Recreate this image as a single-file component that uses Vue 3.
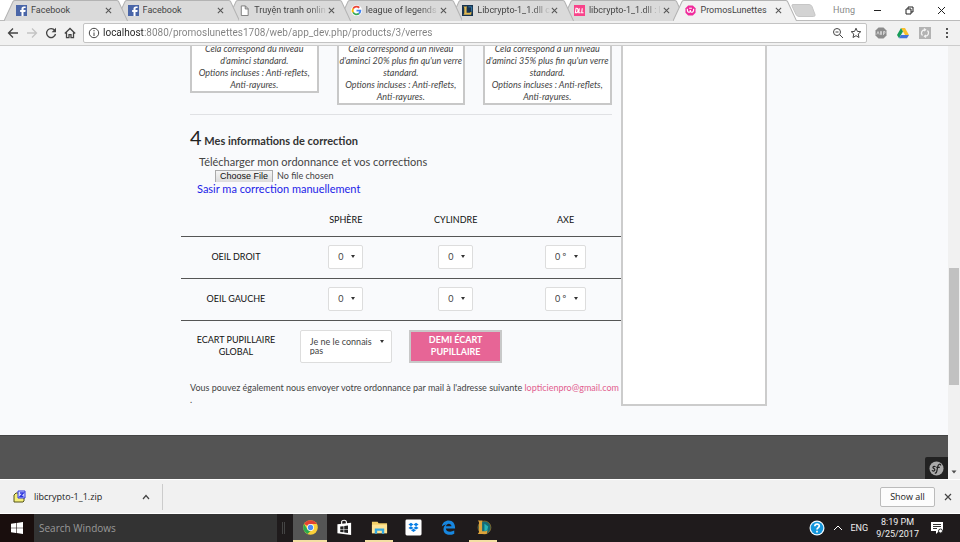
<script setup>
import { ref } from 'vue'

const tabs = [
  { title: 'Facebook', icon: 'facebook' },
  { title: 'Facebook', icon: 'facebook' },
  { title: 'Truyện tranh onlin', icon: 'page', fade: true },
  { title: 'league of legends', icon: 'google', fade: true },
  { title: 'Libcrypto-1_1.dll c', icon: 'lol', fade: true },
  { title: 'libcrypto-1_1.dll : l', icon: 'dll', fade: true },
  { title: 'PromosLunettes', icon: 'promo', active: true },
]

const address = ref('localhost:8080/promoslunettes1708/web/app_dev.php/products/3/verres')

const offers = [
  ['Cela correspond du niveau', "d'aminci standard.", 'Options incluses : Anti-reflets,', 'Anti-rayures.'],
  ['Cela correspond à un niveau', "d'aminci 20% plus fin qu'un verre", 'standard.', 'Options incluses : Anti-reflets,', 'Anti-rayures.'],
  ['Cela correspond à un niveau', "d'aminci 35% plus fin qu'un verre", 'standard.', 'Options incluses : Anti-reflets,', 'Anti-rayures.'],
]

const fields = [
  { name: 'Sphère', value: '0' },
  { name: 'Cylindre', value: '0' },
  { name: 'Axe', value: '0 º' },
]
const eyes = ['Oeil droit', 'Oeil gauche']

const apps = [
  { name: 'Chrome', icon: 'chrome', open: true, focused: true },
  { name: 'Store', icon: 'store' },
  { name: 'Explorer', icon: 'folder', open: true },
  { name: 'Dropbox', icon: 'dropbox' },
  { name: 'Edge', icon: 'edge' },
  { name: 'League of Legends', icon: 'league', open: true },
]
</script>

<template>
  <div class="desktop">
    <header class="tabstrip">
      <div class="tabs">
        <div v-for="(tab, i) in tabs" :key="i" class="tab" :class="{ active: tab.active }" :style="{ zIndex: tab.active ? 20 : 10 - i }">
          <svg class="tab-shape" viewBox="0 0 123 21" preserveAspectRatio="none"><path d="M0 21L9 1.5Q9.500 .5 11 .5H112Q113.500 .5 114 1.500L123 21" /></svg>
          <svg class="favicon" viewBox="0 0 12 12">
            <g v-if="tab.icon === 'facebook'"><rect width="12" height="12" fill="#4a66a8" /><path d="M8.200 12V7.500h2l.3-2H8.200V4.200c0-.7.300-1 1-1h1.300V1.500H8.700C6.900 1.500 6 2.500 6 4v1.500H4.500v2H6V12z" fill="#fff" /></g>
            <path v-else-if="tab.icon === 'page'" d="M2.500 1h4.500l3 3v7.500H2.500zM6.800 1v3.300H10" fill="#fff" stroke="#777" />
            <g v-else-if="tab.icon === 'google'" fill="none" stroke-width="2"><circle cx="6" cy="6" r="6" fill="#fff" stroke="none" /><path d="M9 3A4.200 4.200 0 0 0 2.300 4" stroke="#ea4335" /><path d="M2.300 4a4.200 4.200 0 0 0 0 4" stroke="#fbbc05" /><path d="M2.300 8A4.200 4.200 0 0 0 8.700 9.200" stroke="#34a853" /><path d="M8.700 9.200A4.200 4.200 0 0 0 10.200 6.200H6" stroke="#4285f4" /></g>
            <g v-else-if="tab.icon === 'lol'"><rect width="12" height="12" fill="#17334f" /><path d="M1.500 1.500h4L5 3v5.500h3.500l2-1.500-.5 3.500H1.500L2.500 9V3z" fill="#e0b850" /><path d="M7 2h3.500v5" stroke="#3981b0" fill="none" /></g>
            <g v-else-if="tab.icon === 'dll'"><rect width="12" height="12" fill="#f8438a" /><path d="M1.500 8.500l.7-5h1c1.600 0 1.800 5-.7 5zM5.800 3.500l-.6 5h2M9 3.500l-.6 5h2" fill="none" stroke="#fff" stroke-width="1.200" /></g>
            <g v-else><path d="M3.500.5h5l3 3v5l-3 3h-5l-3-3v-5z" fill="#f02a9b" /><path d="M2.500 4c0 5 3.300 5 3.300 1.500C5.800 9 9.500 9 9.500 4M4.500 3.500h3" fill="none" stroke="#fff" stroke-width="1.200" /></g>
          </svg>
          <span class="tab-title" :class="{ fade: tab.fade }">{{ tab.title }}</span>
          <button class="plain close" :aria-label="'Close ' + tab.title"><svg viewBox="0 0 8 8"><path d="M1 1l6 6M7 1L1 7" /></svg></button>
        </div>
      </div>
      <button class="plain newtab" aria-label="New tab"><svg viewBox="0 0 25 13"><path d="M2 .5h16q2 0 3 2l3 8q.5 2-1.500 2H8q-2 0-3-2L1 2Q.500.500 2 .5" fill="#d3d3d3" stroke="#c6c6c6" /></svg></button>
      <span class="profile">Hưng</span>
      <div class="window-controls">
        <button class="plain" aria-label="Minimize"><svg viewBox="0 0 9 9"><path d="M1 4.500h7" /></svg></button>
        <button class="plain" aria-label="Restore"><svg viewBox="0 0 9 9"><path d="M1 3h5v5H1zM3 3V1h5v5H6" /></svg></button>
        <button class="plain" aria-label="Close window"><svg viewBox="0 0 9 9"><path d="M1 1l7 7M8 1L1 8" /></svg></button>
      </div>
    </header>

    <nav class="toolbar">
      <button class="plain" aria-label="Back"><svg viewBox="0 0 12 12"><path d="M11 6H2M6 1.500L1.500 6 6 10.500" /></svg></button>
      <button class="plain muted" aria-label="Forward"><svg viewBox="0 0 12 12"><path d="M1 6h9M6 1.500L10.500 6 6 10.500" /></svg></button>
      <button class="plain" aria-label="Reload"><svg viewBox="0 0 12 12"><path d="M9.800 3.500A4.500 4.500 0 1 0 10.500 7" /><path d="M11 .8v4.400H6.600z" fill="#444" stroke="none" /></svg></button>
      <button class="plain" aria-label="Home"><svg viewBox="0 0 12 12"><path d="M.8 6.500L6 1.500l5.200 5M2.500 5.500v5.200h2.500v-3h2v3h2.500V5.500" /></svg></button>
      <div class="omnibox">
        <svg class="info" viewBox="0 0 12 12"><circle cx="6" cy="6" r="4.700" /><path d="M6 5.500V9M6 3v1.300" /></svg>
        <input v-model="address" class="address" type="text" aria-label="Address" spellcheck="false">
        <button class="plain" aria-label="Zoom"><svg class="thin" viewBox="0 0 12 12"><circle cx="5" cy="5" r="3.500" /><path d="M7.800 7.800L11 11M3.500 5h3" /></svg></button>
        <button class="plain" aria-label="Bookmark"><svg class="thin" viewBox="0 0 12 12"><path d="M6 1.200l1.400 3.200 3.400.3-2.600 2.300.8 3.500L6 8.700l-3 1.800.8-3.500L1.200 4.700l3.400-.3z" /></svg></button>
      </div>
      <div class="extensions">
        <button class="plain" aria-label="Ad blocker"><svg viewBox="0 0 12 12"><path d="M3.500.5h5l3 3v5l-3 3h-5l-3-3v-5z" fill="#8c8c8c" stroke="none" /><path d="M1.800 7.500L3 4.500l1.200 3M5.500 7.500v-3h1v3zM8.500 8V4.500H10v1.700H8.500" stroke="#ddd" stroke-width=".8" /></svg></button>
        <button class="plain" aria-label="Drive"><svg viewBox="0 0 12 12"><path d="M4 1h4l4 7H8z" fill="#fbc02d" stroke="none" /><path d="M4 1L0 8l2 3.300L6 4.500z" fill="#169c58" stroke="none" /><path d="M4 8h8l-2 3.300H2z" fill="#4472d8" stroke="none" /></svg></button>
        <button class="plain" aria-label="Sync"><svg viewBox="0 0 12 12"><path d="M0 0h12v12H0z" fill="#b3b3b3" stroke="none" /><path d="M3.500 8.500A3.300 3.300 0 0 1 6 2.800M8.500 3.500A3.300 3.300 0 0 1 6 9.200M5 1.500l1.500 1.300L5 4M7 8L5.500 9.200 7 10.500" stroke="#f3f3f3" /></svg></button>
        <button class="plain" aria-label="Menu"><svg viewBox="0 0 12 12"><path d="M5 1h2v2H5zM5 5h2v2H5zM5 9h2v2H5z" fill="#555" stroke="none" /></svg></button>
      </div>
    </nav>

    <div class="viewport">
      <div class="page">
        <main class="container">
          <section class="content">
            <div class="offers">
              <article v-for="(lines, i) in offers" :key="i" class="offer">
                <div v-for="line in lines" :key="line">{{ line }}</div>
              </article>
            </div>
            <hr>
            <h2><span class="step">4</span> Mes informations de correction</h2>
            <div class="upload">
              <label for="prescription">Télécharger mon ordonnance et vos corrections</label>
              <input id="prescription" type="file">
              <a href="#correction">Sasir ma correction manuellement</a>
            </div>
            <table id="correction">
              <thead>
                <tr><th></th><th v-for="f in fields" :key="f.name" scope="col">{{ f.name }}</th></tr>
              </thead>
              <tbody>
                <tr v-for="eye in eyes" :key="eye">
                  <th scope="row">{{ eye }}</th>
                  <td v-for="f in fields" :key="f.name">
                    <span class="picker"><select :aria-label="eye + ' ' + f.name"><option>{{ f.value }}</option></select></span>
                  </td>
                </tr>
                <tr class="gap-row">
                  <th scope="row"><label for="pupil">Ecart pupillaire global</label></th>
                  <td><span class="picker wide"><select id="pupil"><option>Je ne le connais pas</option></select></span></td>
                  <td><button class="half">Demi écart pupillaire</button></td>
                  <td></td>
                </tr>
              </tbody>
            </table>
            <p class="mail">Vous pouvez également nous envoyer votre ordonnance par mail à l'adresse suivante <a href="mailto:lopticienpro@gmail.com">lopticienpro@gmail.com</a><br>.</p>
          </section>
          <aside class="summary"></aside>
        </main>
        <footer class="footer">
          <button class="plain symfony" aria-label="Symfony"><svg viewBox="0 0 16 16"><circle cx="8" cy="8" r="7.500" fill="#aaa" /><path d="M7 6.300C5.500 5 3.500 6 4.500 7.500c.8.800 2 .8 1.700 2.200-.4 1.300-2.400 1.300-3 .2M12.500 4.800c0-2-2.500-1.800-3 .7l-1.300 5.800c-.3 1.300-1.200 1.900-2 1.300M7.800 6.800h3.700" fill="none" stroke="#222" stroke-width="1.300" /></svg></button>
        </footer>
      </div>
      <div class="scrollbar">
        <span class="track-before"></span>
        <span class="thumb"></span>
        <span class="track-after"></span>
        <svg viewBox="0 0 12 14"><path d="M3.500 5.500h5L6 8.500z" fill="#505050" /></svg>
      </div>
    </div>

    <section class="downloads">
      <div class="download">
        <svg class="zip" viewBox="0 0 14 14"><path d="M1 5l2-2h8v8l-1 1H1z" fill="#f5ef78" stroke="#55551a" /><path d="M5 1h7v7H5z" fill="#d6dcff" stroke="#2d35dc" /><path d="M7 3h3.500L7 6.500h3.500" fill="none" stroke="#2d35dc" stroke-width="1.300" /></svg>
        <span class="filename">libcrypto-1_1.zip</span>
        <button class="plain" aria-label="Download options"><svg viewBox="0 0 8 8"><path d="M1 6l3-3.500L7 6" /></svg></button>
      </div>
      <button class="showall">Show all</button>
      <button class="plain" aria-label="Close downloads"><svg viewBox="0 0 8 8"><path d="M1 1l6 6M7 1L1 7" /></svg></button>
    </section>

    <footer class="taskbar">
      <button class="plain start" aria-label="Start"><svg viewBox="0 0 12 12"><path d="M0 1.700l5-.7v4.700H0zM5.600.9L12 0v5.700H5.600zM0 6.300h5V11l-5-.7zM5.600 6.300H12V12l-6.400-.9z" fill="#fff" /></svg></button>
      <input class="search" type="text" placeholder="Search Windows" aria-label="Search Windows">
      <span class="grip"></span>
      <button v-for="app in apps" :key="app.name" class="plain app" :class="{ open: app.open, focused: app.focused }" :aria-label="app.name">
        <svg viewBox="0 0 18 18">
          <g v-if="app.icon === 'chrome'"><circle cx="9" cy="9" r="7.700" fill="#fbcf39" /><path d="M9 9L2.300 5.200A7.700 7.700 0 0 1 15.700 5.200H9z" fill="#e34133" /><path d="M2.300 5.200L6 11.500l3 1.200-3.200 3.300A7.700 7.700 0 0 1 2.300 5.200" fill="#2da94f" /><circle cx="9" cy="9" r="3.600" fill="#fff" /><circle cx="9" cy="9" r="2.800" fill="#4c8bf5" /></g>
          <g v-else-if="app.icon === 'store'"><path d="M1.500 5.500L16 4v13L1.500 15z" fill="#fff" /><path d="M6 6V3c0-2 5-2.500 5 .5v2" fill="none" stroke="#fff" stroke-width="1.200" /><path d="M4.500 8l3.500-.4v2.900H4.500zM8.700 7.500l4-.5v3.500h-4zM4.500 11.200H8v2.900l-3.500-.4zM8.700 11.200h4v3.500l-4-.5z" fill="#222" /></g>
          <g v-else-if="app.icon === 'folder'"><path d="M1 3h6l1 1.500h9V15H1z" fill="#f2cf67" /><path d="M1 6h16v9H1z" fill="#fee596" /><path d="M4 15.500V10h10v5.500h-2.500v-3h-5v3z" fill="#35a9e1" /></g>
          <g v-else-if="app.icon === 'dropbox'"><rect x=".5" y=".5" width="17" height="17" rx="1.500" fill="#fff" /><path d="M6.300 4L9 5.800 6.300 7.600 3.600 5.800zM11.700 4l2.700 1.800-2.700 1.800L9 5.800zM6.300 7.600L9 9.400l-2.700 1.800-2.700-1.800zM11.700 7.600l2.700 1.800-2.700 1.800L9 9.400zM6.300 11.800L9 10.200l2.700 1.600L9 13.800z" fill="#087ee5" /></g>
          <path v-else-if="app.icon === 'edge'" fill-rule="evenodd" d="M2 8C2.500 4 5.500 1.700 9.200 1.700c4.300 0 6.800 3 6.800 8.300H6.200c.2 4 5.500 4.200 8.900 2.300v3.200C9.500 18.500 3.400 16 3.700 10.700c.1-2.500 1.300-4 3-5C4.600 5.900 3 6.700 2 8m4.300-.3h5.900C12 3.900 6.700 4.200 6.300 7.700" fill="#1787e0" />
          <g v-else><circle cx="10" cy="9" r="6.800" fill="#146c78" stroke="#7b652c" /><path d="M10 5l4 3-1 4-3 1z" fill="#28b5b6" /><path d="M3 1.500h5L7.500 3v10h3.800l2-1-1 4H3l1.200-2V3.300z" fill="#dda33b" /></g>
        </svg>
      </button>
      <div class="tray">
        <svg class="help" viewBox="0 0 16 16"><circle cx="8" cy="8" r="7.500" fill="#f4fbff" /><circle cx="8" cy="8" r="6.300" fill="#1597dd" /><path d="M5.800 6.200c.2-3 4.700-2.700 4.500-.1C10.200 7.500 8 7.700 8 9.500M8 10.800v1.700" fill="none" stroke="#fff" stroke-width="1.700" /></svg>
        <svg class="chevron" viewBox="0 0 10 10"><path d="M1 7l4-4 4 4" /></svg>
        <span>ENG</span>
        <span class="clock">8:19 PM<br>9/25/2017</span>
        <svg class="notice" viewBox="0 0 12 12"><path d="M0 0h12v9H8l-3 3V9H0z" fill="#fff" /><path d="M2 2.500h8M2 4.500h8M2 6.500h4" stroke="#333" fill="none" /><circle cx="9.500" cy="9" r="2" fill="#fff" stroke="#333" /></svg>
      </div>
    </footer>
  </div>
</template>

<style>
body { margin: 0; }
</style>

<style scoped>
* { box-sizing: border-box; }
.desktop { display: flex; flex-direction: column; min-height: 100vh; font: 9px/12px "Open Sans", "Noto Sans", sans-serif; color: #444; background: #f1f1f1; }
.plain { display: flex; align-items: center; justify-content: center; border: 0; padding: 0; background: none; font: inherit; color: inherit; }
svg { display: block; flex: none; }
input, select, button { font: inherit; color: inherit; }

.tabstrip { display: flex; align-items: center; height: 21px; padding-left: 4px; background: #fff; border-bottom: 1px solid #bbb; }
.tabs { display: flex; flex: 0 1 781px; min-width: 0; height: 21px; font-family: Roboto, "Open Sans", sans-serif; }
.tab { position: relative; display: flex; flex: 1; align-items: center; min-width: 0; padding: 0 3px 0 12px; }
.tab-shape { position: absolute; left: 0; top: 0; width: calc(100% + 12px); height: 21px; fill: #dadada; stroke: #b3b3b3; }
.tab.active .tab-shape { fill: #f1f1f1; }
.favicon { position: relative; width: 11px; height: 11px; margin-right: 4px; }
.tab-title { position: relative; flex: 1; min-width: 0; overflow: hidden; white-space: nowrap; }
.tab-title.fade { mask-image: linear-gradient(90deg, #000 75%, transparent); }
.tab .close { position: relative; width: 8px; height: 12px; }
.close svg { width: 7px; height: 7px; fill: none; stroke: #555; stroke-width: 1.2; }
.newtab { margin-left: 6px; }
.newtab svg { width: 25px; height: 13px; }
.profile { margin-left: 17px; font-family: Roboto, "Open Sans", sans-serif; color: #888; }
.window-controls { display: flex; flex: 1; justify-content: flex-end; gap: 23px; padding-right: 14px; }
.window-controls svg { width: 9px; height: 9px; fill: none; stroke: #222; }

.toolbar { display: flex; align-items: center; gap: 7px; height: 25px; padding: 0 7px; background: #f1f1f1; border-bottom: 1px solid #ccc; }
.toolbar svg { width: 12px; height: 12px; fill: none; stroke: #444; stroke-width: 1.3; }
.toolbar .thin { stroke-width: 1; }
.toolbar .muted svg { stroke: #c4c4c4; }
.omnibox { display: flex; flex: 1; align-items: center; gap: 6px; height: 20px; padding: 0 4px; background: #fff; border: 1px solid #c3c3c3; border-radius: 2px; }
.omnibox .info { stroke-width: 1; }
.address { flex: 1; min-width: 0; margin-left: -3px; border: 0; padding: 0; outline: 0; font: 10px/14px Roboto, "Open Sans", sans-serif; color: transparent; background: linear-gradient(90deg, #222 41px, #808080 41px) text; }
.extensions { display: flex; gap: 10px; margin-left: 1px; }

.viewport { display: flex; flex: 1; overflow: hidden; font-family: Lato, "Open Sans", sans-serif; }
.page { display: flex; flex: 1; flex-direction: column; min-width: 0; background: #f9fafc; }
.container { display: flex; width: 100%; max-width: 586px; margin: 0 auto 29px; }
.content { flex: 0 0 75%; min-width: 0; }
.summary { flex: 0 0 25%; background: #fff; border: 2px solid #ccc; border-top: 0; }
.offers { display: flex; align-items: flex-start; gap: 18px; margin-top: -3px; padding: 0 9px; }
.offer { flex: 1; border: 2px solid #c8c8c8; border-top: 0; background: #fff; font-style: italic; text-align: center; white-space: nowrap; }
hr { height: 1px; margin: 9px 9px 11px; border: 0; background: #e0e1e4; }
h2 { margin: 0 9px; font-size: 11px; line-height: 22px; font-weight: 700; color: #333; }
.step { font-size: 20px; font-weight: 400; color: #222; }
.upload { display: flex; flex-direction: column; align-items: flex-start; padding: 3px 16px 0; font-size: 11px; line-height: 14px; }
.upload label { padding-left: 2px; }
.upload input { margin-left: 18px; width: 200px; height: 13px; font-size: 9px; line-height: 13px; }
.upload input::file-selector-button { height: 13px; margin: 0 4px 0 0; padding: 0 4px; border: 1px solid #aaa; border-radius: 0; background: linear-gradient(#f5f5f5, #dcdcdc); font: 9px/11px "Liberation Sans", sans-serif; color: #111; }
.upload a { color: #1d1de8; text-decoration: none; }
table { width: 100%; margin-top: 9px; border-collapse: collapse; table-layout: fixed; text-align: center; }
th { padding: 0 12px; font-size: 9px; line-height: 12px; font-weight: 400; text-transform: uppercase; color: #111; }
td { padding: 0; }
tr { height: 42px; border-bottom: 1px solid #555; }
thead tr { height: 31px; }
tbody .gap-row { height: 52px; border: 0; }
.picker { position: relative; display: inline-block; vertical-align: middle; }
.picker::after { content: ""; position: absolute; right: 8px; top: 10px; border: 2px solid transparent; border-top: 3px solid #333; border-bottom: 0; pointer-events: none; }
.picker select { display: block; height: 24px; padding: 0 18px 0 9px; border: 1px solid #ddd; border-radius: 2px; background: #fff; appearance: none; }
.wide { width: 92px; }
.picker.wide select { width: 100%; height: 33px; padding: 6px 18px 6px 9px; line-height: 9px; white-space: normal; }
.half { width: 93px; height: 33px; padding: 0 12px; border: 2px solid #c8c8c8; background: #e76596; color: #fff; font-weight: 700; line-height: 12px; text-transform: uppercase; }
.mail { margin: 10px 0 0 9px; white-space: nowrap; }
.mail a { color: #e2608f; text-decoration: none; }
.footer { display: flex; flex: 1; align-items: flex-end; justify-content: flex-end; min-height: 44px; background: #545454; border-top: 1px solid #444; }
.symfony { width: 23px; height: 22px; background: #222; border-top-left-radius: 2px; }
.symfony svg { width: 15px; height: 15px; }
.scrollbar { display: flex; flex-direction: column; width: 12px; background: #f1f1f1; }
.scrollbar svg { width: 12px; height: 14px; }
.track-before { flex: 223; }
.thumb { flex: 117; margin: 0 1px; background: #c1c1c1; }
.track-after { flex: 80; }

.downloads { display: flex; align-items: center; height: 35px; padding-right: 8px; border-top: 1px solid #fff; border-bottom: 1px solid #fff; background: #f1f1f1; }
.downloads .plain svg { width: 8px; height: 8px; fill: none; stroke: #444; stroke-width: 1.2; }
.download { display: flex; align-items: center; width: 163px; height: 26px; margin-right: auto; padding: 0 12px 0 13px; border-right: 1px solid #ccc; }
.zip { width: 14px; height: 14px; margin-right: 7px; }
.filename { flex: 1; color: #222; }
.showall { width: 55px; height: 20px; margin-right: 9px; padding: 0; border: 1px solid #bbb; border-radius: 2px; background: #fcfcfc; color: #222; }

.taskbar { display: flex; height: 28px; background: #1f1b1c; color: #eee; }
.start { width: 34px; background: #190e0d; }
.start svg { width: 12px; height: 12px; }
.search { width: 243px; padding: 0 5px; border: 0; outline: 0; background: #333; font-size: 10px; }
.search::placeholder { color: #999; opacity: 1; }
.grip { width: 3px; height: 12px; margin: 8px 8px 0 5px; border: solid #444; border-width: 0 1px; }
.app { width: 35px; border-bottom: 2px solid transparent; }
.app svg { width: 17px; height: 17px; }
.app.open { width: 28px; margin: 0 3px; border-color: #f4dfa3; }
.app.focused { width: 34px; margin: 0; background-color: #555; }
.tray { display: flex; align-items: center; margin-left: auto; padding-right: 17px; font-family: Roboto, "Open Sans", sans-serif; }
.help { width: 16px; height: 16px; }
.chevron { width: 10px; height: 10px; margin: 0 7px 0 8px; fill: none; stroke: #fff; }
.clock { margin: 0 12px 0 8px; text-align: center; }
.notice { width: 12px; height: 12px; }
</style>
